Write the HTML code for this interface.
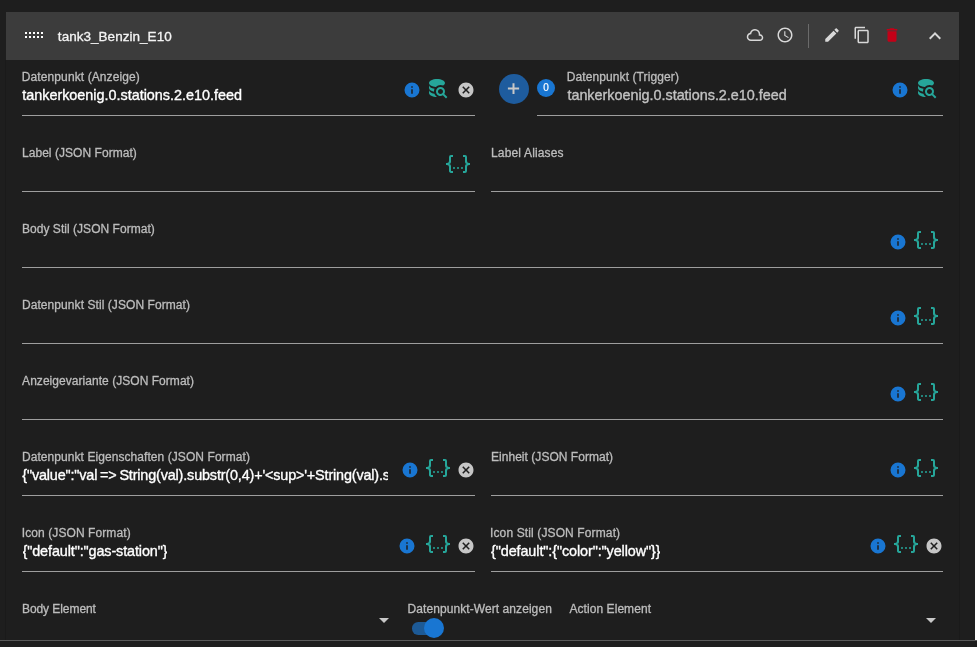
<!DOCTYPE html>
<html lang="de"><head><meta charset="utf-8"><title>tank3_Benzin_E10</title>
<style>
html,body{margin:0;padding:0;}
body{width:977px;height:647px;overflow:hidden;position:relative;background:#1e1e1e;font-family:"Liberation Sans",sans-serif;color:#fff;}
.abs{position:absolute;}
.ic{position:absolute;display:block;}
.lbl,#ttl{-webkit-text-stroke:0.3px currentColor;}
.val{-webkit-text-stroke:0.35px currentColor;}
#app{position:absolute;left:0;top:0;width:977px;height:647px;will-change:transform;}
.lbl{position:absolute;font-size:12px;line-height:14px;color:#bdbdbd;white-space:nowrap;}
.val{position:absolute;font-size:14.4px;line-height:18px;color:#fff;white-space:nowrap;overflow:hidden;}
.ul{position:absolute;height:1px;background:#9e9e9e;}
#hdr{position:absolute;left:6px;top:12px;width:953px;height:48px;background:#3c3c3c;}
#ttl{position:absolute;top:28.7px;font-size:13.5px;line-height:16px;color:#f4f4f4;white-space:nowrap;}
</style></head><body>
<div id="app">
<div class="abs" style="left:5px;top:60px;width:1px;height:580px;background:#1a1a1a"></div>
<div class="abs" style="left:959px;top:60px;width:1px;height:580px;background:#1a1a1a"></div>
<div class="abs" style="left:975px;top:0;width:2px;height:640px;background:#fff"></div>
<div class="abs" style="left:0;top:640px;width:977px;height:1px;background:#5a5a5a"></div>
<div id="hdr"></div>

<svg class="ic" style="left:25px;top:32px;width:18px;height:6px" viewBox="0 0 18 6" fill="#fff"><rect x="0" y="0" width="2" height="2"/><rect x="4" y="0" width="2" height="2"/><rect x="8" y="0" width="2" height="2"/><rect x="12" y="0" width="2" height="2"/><rect x="16" y="0" width="2" height="2"/><rect x="0" y="4" width="2" height="2"/><rect x="4" y="4" width="2" height="2"/><rect x="8" y="4" width="2" height="2"/><rect x="12" y="4" width="2" height="2"/><rect x="16" y="4" width="2" height="2"/></svg>
<div id="ttl" style="left:57.85px;letter-spacing:0.034px;">tank3_Benzin_E10</div>
<svg class="ic" style="left:746.0px;top:26.0px;width:18px;height:18px" viewBox="0 0 24 24"><path fill="#d8d8d8" d="M6.5 20Q4.22 20 2.61 18.43 1 16.85 1 14.58 1 12.63 2.17 11.1 3.35 9.57 5.25 9.15 5.88 6.85 7.75 5.43 9.63 4 12 4 14.93 4 16.96 6.04 19 8.07 19 11 20.73 11.2 21.86 12.5 23 13.78 23 15.5 23 17.38 21.69 18.69 20.38 20 18.5 20M6.5 18H18.5Q19.55 18 20.27 17.27 21 16.55 21 15.5 21 14.45 20.27 13.73 19.55 13 18.5 13H17V11Q17 8.930 15.54 7.46 14.08 6 12 6 9.930 6 8.46 7.46 7 8.930 7 11H6.5Q5.05 11 4.03 12.03 3 13.05 3 14.5 3 15.95 4.03 17 5.05 18 6.5 18Z"/></svg>
<svg class="ic" style="left:776.0px;top:26.0px;width:18px;height:18px" viewBox="0 0 24 24"><path fill="#d8d8d8" d="M11.99 2C6.47 2 2 6.480 2 12s4.470 10 9.990 10C17.520 22 22 17.520 22 12S17.520 2 11.990 2zM12 20c-4.420 0-8-3.580-8-8s3.580-8 8-8 8 3.580 8 8-3.580 8-8 8zm.5-13H11v6l5.250 3.150.75-1.230-4.500-2.670z"/></svg>
<div class="abs" style="left:808px;top:24px;width:1px;height:24px;background:#6b6b6b"></div>
<svg class="ic" style="left:823.0px;top:26.0px;width:18px;height:18px" viewBox="0 0 24 24"><path fill="#d8d8d8" d="M3 17.250V21h3.750L17.810 9.940l-3.750-3.750L3 17.250zM20.710 7.040c.39-.39.39-1.020 0-1.410l-2.340-2.340c-.39-.39-1.020-.39-1.410 0l-1.830 1.830 3.750 3.750 1.830-1.830z"/></svg>
<svg class="ic" style="left:852.5px;top:26.0px;width:18px;height:18px" viewBox="0 0 24 24"><path fill="#d8d8d8" d="M16 1H4c-1.100 0-2 .9-2 2v14h2V3h12V1zm3 4H8c-1.100 0-2 .9-2 2v14c0 1.100.9 2 2 2h11c1.100 0 2-.9 2-2V7c0-1.100-.9-2-2-2zm0 16H8V7h11v14z"/></svg>
<svg class="ic" style="left:883.0px;top:26.0px;width:18px;height:18px" viewBox="0 0 24 24"><path fill="#c30017" d="M6 19c0 1.100.9 2 2 2h8c1.100 0 2-.9 2-2V7H6v12zM19 4h-3.500l-1-1h-5l-1 1H5v2h14V4z"/></svg>
<svg class="ic" style="left:923.0px;top:24.0px;width:24px;height:24px" viewBox="0 0 24 24"><path fill="#d8d8d8" d="M12 8l-6 6 1.410 1.410L12 10.830l4.590 4.580L18 14z"/></svg>
<div class="lbl" style="left:21.8px;top:70px;letter-spacing:0.103px;">Datenpunkt (Anzeige)</div>
<div class="val" style="left:22.27px;top:86px;letter-spacing:-0.012px;">tankerkoenig.0.stations.2.e10.feed</div>
<div class="ul" style="left:22px;top:115px;width:453px"></div>
<svg class="ic" style="left:403px;top:81px;width:18px;height:18px" viewBox="0 0 24 24"><path fill="#1976d2" d="M13,9H11V7H13M13,17H11V11H13M12,2A10,10 0 0,0 2,12A10,10 0 0,0 12,22A10,10 0 0,0 22,12A10,10 0 0,0 12,2Z"/></svg>
<svg class="ic" style="left:425px;top:75.7px;width:24px;height:24px" viewBox="0 0 24 24"><path fill="#26a69a" d="M18.68,12.32C16.92,10.56 14.07,10.57 12.32,12.33C10.56,14.09 10.56,16.94 12.32,18.69C13.81,20.17 16.11,20.43 17.89,19.32L21,22.39L22.39,21L19.3,17.89C20.43,16.12 20.17,13.8 18.68,12.32M17.27,17.27C16.29,18.25 14.71,18.24 13.73,17.27C12.76,16.29 12.76,14.71 13.74,13.73C14.71,12.76 16.29,12.76 17.27,13.73C18.24,14.71 18.24,16.29 17.27,17.27M10.9,20.1C10.25,19.44 9.74,18.65 9.42,17.78C6.27,17.25 4,15.76 4,14V17C4,19.21 7.58,21 12,21V21C11.59,20.74 11.22,20.44 10.9,20.1M4,9V12C4,13.68 6.07,15.12 9,15.7C9,15.63 9,15.57 9,15.5C9,14.57 9.2,13.65 9.58,12.81C6.34,12.3 4,10.79 4,9M12,3C7.58,3 4,4.79 4,7C4,9 7,10.68 10.85,11H10.9C12.1,9.74 13.76,9 15.5,9C16.41,9 17.31,9.19 18.14,9.56C19.17,9.09 19.87,8.12 20,7C20,4.79 16.42,3 12,3Z"/></svg>
<svg class="ic" style="left:457px;top:81px;width:18px;height:18px" viewBox="0 0 24 24"><path fill="#c6c6c6" d="M12,2C17.53,2 22,6.47 22,12C22,17.53 17.53,22 12,22C6.47,22 2,17.53 2,12C2,6.47 6.47,2 12,2M15.59,7L12,10.59L8.41,7L7,8.41L10.59,12L7,15.59L8.41,17L12,13.41L15.59,17L17,15.59L13.41,12L17,8.41L15.59,7Z"/></svg>
<div class="abs" style="left:498.8px;top:73.7px;width:30.4px;height:30.4px;border-radius:50%;background:#1e5c9e"></div>
<svg class="ic" style="left:498px;top:73px;width:32px;height:32px" viewBox="0 0 32 32"><path fill="#c8c8c8" d="M9.900 14.600h11.200v2H9.900zM14.500 10.200h2v10.800h-2z"/></svg>
<div class="abs" style="left:537px;top:79px;width:18px;height:18px;border-radius:50%;background:#1976d2;color:#fff;font-size:10px;line-height:18px;text-align:center;-webkit-text-stroke:0.2px #fff">0</div>
<div class="lbl" style="left:566.7px;top:70px;letter-spacing:0.102px;">Datenpunkt (Trigger)</div>
<div class="val" style="left:567.43px;top:86px;letter-spacing:-0.023px;color:#c2c2c2">tankerkoenig.0.stations.2.e10.feed</div>
<div class="ul" style="left:537px;top:115px;width:406px"></div>
<svg class="ic" style="left:891px;top:81px;width:18px;height:18px" viewBox="0 0 24 24"><path fill="#1976d2" d="M13,9H11V7H13M13,17H11V11H13M12,2A10,10 0 0,0 2,12A10,10 0 0,0 12,22A10,10 0 0,0 22,12A10,10 0 0,0 12,2Z"/></svg>
<svg class="ic" style="left:913.8px;top:75.7px;width:24px;height:24px" viewBox="0 0 24 24"><path fill="#26a69a" d="M18.68,12.32C16.92,10.56 14.07,10.57 12.32,12.33C10.56,14.09 10.56,16.94 12.32,18.69C13.81,20.17 16.11,20.43 17.89,19.32L21,22.39L22.39,21L19.3,17.89C20.43,16.12 20.17,13.8 18.68,12.32M17.27,17.27C16.29,18.25 14.71,18.24 13.73,17.27C12.76,16.29 12.76,14.71 13.74,13.73C14.71,12.76 16.29,12.76 17.27,13.73C18.24,14.71 18.24,16.29 17.27,17.27M10.9,20.1C10.25,19.44 9.74,18.65 9.42,17.78C6.27,17.25 4,15.76 4,14V17C4,19.21 7.58,21 12,21V21C11.59,20.74 11.22,20.44 10.9,20.1M4,9V12C4,13.68 6.07,15.12 9,15.7C9,15.63 9,15.57 9,15.5C9,14.57 9.2,13.65 9.58,12.81C6.34,12.3 4,10.79 4,9M12,3C7.58,3 4,4.79 4,7C4,9 7,10.68 10.85,11H10.9C12.1,9.74 13.76,9 15.5,9C16.41,9 17.31,9.19 18.14,9.56C19.17,9.09 19.87,8.12 20,7C20,4.79 16.42,3 12,3Z"/></svg>
<div class="lbl" style="left:21.98px;top:146px;letter-spacing:0.046px;">Label (JSON Format)</div>
<div class="ul" style="left:22px;top:191px;width:453px"></div>
<svg class="ic" style="left:445.8px;top:152px;width:24px;height:24px" viewBox="0 0 24 24"><path fill="#26a69a" d="M5,3H7V5H5V10A2,2 0 0,1 3,12A2,2 0 0,1 5,14V19H7V21H5C3.93,20.73 3,20.1 3,19V15A2,2 0 0,0 1,13H0V11H1A2,2 0 0,0 3,9V5A2,2 0 0,1 5,3M19,3A2,2 0 0,1 21,5V9A2,2 0 0,0 23,11H24V13H23A2,2 0 0,0 21,15V19A2,2 0 0,1 19,21H17V19H19V14A2,2 0 0,1 21,12A2,2 0 0,1 19,10V5H17V3H19M12,15A1,1 0 0,1 13,16A1,1 0 0,1 12,17A1,1 0 0,1 11,16A1,1 0 0,1 12,15M8,15A1,1 0 0,1 9,16A1,1 0 0,1 8,17A1,1 0 0,1 7,16A1,1 0 0,1 8,15M16,15A1,1 0 0,1 17,16A1,1 0 0,1 16,17A1,1 0 0,1 15,16A1,1 0 0,1 16,15Z"/></svg>
<div class="lbl" style="left:490.98px;top:146px;letter-spacing:0.160px;">Label Aliases</div>
<div class="ul" style="left:491px;top:191px;width:452px"></div>
<div class="lbl" style="left:21.98px;top:222px;letter-spacing:0.038px;">Body Stil (JSON Format)</div>
<div class="ul" style="left:22px;top:267px;width:921px"></div>
<svg class="ic" style="left:889px;top:233px;width:18px;height:18px" viewBox="0 0 24 24"><path fill="#1976d2" d="M13,9H11V7H13M13,17H11V11H13M12,2A10,10 0 0,0 2,12A10,10 0 0,0 12,22A10,10 0 0,0 22,12A10,10 0 0,0 12,2Z"/></svg>
<svg class="ic" style="left:914.2px;top:228px;width:24px;height:24px" viewBox="0 0 24 24"><path fill="#26a69a" d="M5,3H7V5H5V10A2,2 0 0,1 3,12A2,2 0 0,1 5,14V19H7V21H5C3.93,20.73 3,20.1 3,19V15A2,2 0 0,0 1,13H0V11H1A2,2 0 0,0 3,9V5A2,2 0 0,1 5,3M19,3A2,2 0 0,1 21,5V9A2,2 0 0,0 23,11H24V13H23A2,2 0 0,0 21,15V19A2,2 0 0,1 19,21H17V19H19V14A2,2 0 0,1 21,12A2,2 0 0,1 19,10V5H17V3H19M12,15A1,1 0 0,1 13,16A1,1 0 0,1 12,17A1,1 0 0,1 11,16A1,1 0 0,1 12,15M8,15A1,1 0 0,1 9,16A1,1 0 0,1 8,17A1,1 0 0,1 7,16A1,1 0 0,1 8,15M16,15A1,1 0 0,1 17,16A1,1 0 0,1 16,17A1,1 0 0,1 15,16A1,1 0 0,1 16,15Z"/></svg>
<div class="lbl" style="left:21.98px;top:298px;letter-spacing:0.070px;">Datenpunkt Stil (JSON Format)</div>
<div class="ul" style="left:22px;top:343px;width:921px"></div>
<svg class="ic" style="left:889px;top:309px;width:18px;height:18px" viewBox="0 0 24 24"><path fill="#1976d2" d="M13,9H11V7H13M13,17H11V11H13M12,2A10,10 0 0,0 2,12A10,10 0 0,0 12,22A10,10 0 0,0 22,12A10,10 0 0,0 12,2Z"/></svg>
<svg class="ic" style="left:914.2px;top:304px;width:24px;height:24px" viewBox="0 0 24 24"><path fill="#26a69a" d="M5,3H7V5H5V10A2,2 0 0,1 3,12A2,2 0 0,1 5,14V19H7V21H5C3.93,20.73 3,20.1 3,19V15A2,2 0 0,0 1,13H0V11H1A2,2 0 0,0 3,9V5A2,2 0 0,1 5,3M19,3A2,2 0 0,1 21,5V9A2,2 0 0,0 23,11H24V13H23A2,2 0 0,0 21,15V19A2,2 0 0,1 19,21H17V19H19V14A2,2 0 0,1 21,12A2,2 0 0,1 19,10V5H17V3H19M12,15A1,1 0 0,1 13,16A1,1 0 0,1 12,17A1,1 0 0,1 11,16A1,1 0 0,1 12,15M8,15A1,1 0 0,1 9,16A1,1 0 0,1 8,17A1,1 0 0,1 7,16A1,1 0 0,1 8,15M16,15A1,1 0 0,1 17,16A1,1 0 0,1 16,17A1,1 0 0,1 15,16A1,1 0 0,1 16,15Z"/></svg>
<div class="lbl" style="left:22.12px;top:374px;letter-spacing:0.041px;">Anzeigevariante (JSON Format)</div>
<div class="ul" style="left:22px;top:419px;width:921px"></div>
<svg class="ic" style="left:889px;top:385px;width:18px;height:18px" viewBox="0 0 24 24"><path fill="#1976d2" d="M13,9H11V7H13M13,17H11V11H13M12,2A10,10 0 0,0 2,12A10,10 0 0,0 12,22A10,10 0 0,0 22,12A10,10 0 0,0 12,2Z"/></svg>
<svg class="ic" style="left:914.2px;top:380px;width:24px;height:24px" viewBox="0 0 24 24"><path fill="#26a69a" d="M5,3H7V5H5V10A2,2 0 0,1 3,12A2,2 0 0,1 5,14V19H7V21H5C3.93,20.73 3,20.1 3,19V15A2,2 0 0,0 1,13H0V11H1A2,2 0 0,0 3,9V5A2,2 0 0,1 5,3M19,3A2,2 0 0,1 21,5V9A2,2 0 0,0 23,11H24V13H23A2,2 0 0,0 21,15V19A2,2 0 0,1 19,21H17V19H19V14A2,2 0 0,1 21,12A2,2 0 0,1 19,10V5H17V3H19M12,15A1,1 0 0,1 13,16A1,1 0 0,1 12,17A1,1 0 0,1 11,16A1,1 0 0,1 12,15M8,15A1,1 0 0,1 9,16A1,1 0 0,1 8,17A1,1 0 0,1 7,16A1,1 0 0,1 8,15M16,15A1,1 0 0,1 17,16A1,1 0 0,1 16,17A1,1 0 0,1 15,16A1,1 0 0,1 16,15Z"/></svg>
<div class="lbl" style="left:21.98px;top:450px;letter-spacing:0.067px;">Datenpunkt Eigenschaften (JSON Format)</div>
<div class="val" style="left:22.3px;top:466px;letter-spacing:-0.155px;width:366.2px;word-spacing:-1px">{"value":"val =&gt; String(val).substr(0,4)+'&lt;sup&gt;'+String(val).substr(4,1)+'&lt;/sup&gt;'"}</div>
<div class="ul" style="left:22px;top:495px;width:453px"></div>
<svg class="ic" style="left:401px;top:461px;width:18px;height:18px" viewBox="0 0 24 24"><path fill="#1976d2" d="M13,9H11V7H13M13,17H11V11H13M12,2A10,10 0 0,0 2,12A10,10 0 0,0 12,22A10,10 0 0,0 22,12A10,10 0 0,0 12,2Z"/></svg>
<svg class="ic" style="left:425.8px;top:456px;width:24px;height:24px" viewBox="0 0 24 24"><path fill="#26a69a" d="M5,3H7V5H5V10A2,2 0 0,1 3,12A2,2 0 0,1 5,14V19H7V21H5C3.93,20.73 3,20.1 3,19V15A2,2 0 0,0 1,13H0V11H1A2,2 0 0,0 3,9V5A2,2 0 0,1 5,3M19,3A2,2 0 0,1 21,5V9A2,2 0 0,0 23,11H24V13H23A2,2 0 0,0 21,15V19A2,2 0 0,1 19,21H17V19H19V14A2,2 0 0,1 21,12A2,2 0 0,1 19,10V5H17V3H19M12,15A1,1 0 0,1 13,16A1,1 0 0,1 12,17A1,1 0 0,1 11,16A1,1 0 0,1 12,15M8,15A1,1 0 0,1 9,16A1,1 0 0,1 8,17A1,1 0 0,1 7,16A1,1 0 0,1 8,15M16,15A1,1 0 0,1 17,16A1,1 0 0,1 16,17A1,1 0 0,1 15,16A1,1 0 0,1 16,15Z"/></svg>
<svg class="ic" style="left:457px;top:461px;width:18px;height:18px" viewBox="0 0 24 24"><path fill="#c6c6c6" d="M12,2C17.53,2 22,6.47 22,12C22,17.53 17.53,22 12,22C6.47,22 2,17.53 2,12C2,6.47 6.47,2 12,2M15.59,7L12,10.59L8.41,7L7,8.41L10.59,12L7,15.59L8.41,17L12,13.41L15.59,17L17,15.59L13.41,12L17,8.41L15.59,7Z"/></svg>
<div class="lbl" style="left:490.98px;top:450px;letter-spacing:0.039px;">Einheit (JSON Format)</div>
<div class="ul" style="left:491px;top:495px;width:452px"></div>
<svg class="ic" style="left:889px;top:461px;width:18px;height:18px" viewBox="0 0 24 24"><path fill="#1976d2" d="M13,9H11V7H13M13,17H11V11H13M12,2A10,10 0 0,0 2,12A10,10 0 0,0 12,22A10,10 0 0,0 22,12A10,10 0 0,0 12,2Z"/></svg>
<svg class="ic" style="left:914.2px;top:456px;width:24px;height:24px" viewBox="0 0 24 24"><path fill="#26a69a" d="M5,3H7V5H5V10A2,2 0 0,1 3,12A2,2 0 0,1 5,14V19H7V21H5C3.93,20.73 3,20.1 3,19V15A2,2 0 0,0 1,13H0V11H1A2,2 0 0,0 3,9V5A2,2 0 0,1 5,3M19,3A2,2 0 0,1 21,5V9A2,2 0 0,0 23,11H24V13H23A2,2 0 0,0 21,15V19A2,2 0 0,1 19,21H17V19H19V14A2,2 0 0,1 21,12A2,2 0 0,1 19,10V5H17V3H19M12,15A1,1 0 0,1 13,16A1,1 0 0,1 12,17A1,1 0 0,1 11,16A1,1 0 0,1 12,15M8,15A1,1 0 0,1 9,16A1,1 0 0,1 8,17A1,1 0 0,1 7,16A1,1 0 0,1 8,15M16,15A1,1 0 0,1 17,16A1,1 0 0,1 16,17A1,1 0 0,1 15,16A1,1 0 0,1 16,15Z"/></svg>
<div class="lbl" style="left:21.85px;top:526px;letter-spacing:0.084px;">Icon (JSON Format)</div>
<div class="val" style="left:22.51px;top:542px;letter-spacing:-0.108px;">{"default":"gas-station"}</div>
<div class="ul" style="left:22px;top:571px;width:453px"></div>
<svg class="ic" style="left:397.8px;top:537px;width:18px;height:18px" viewBox="0 0 24 24"><path fill="#1976d2" d="M13,9H11V7H13M13,17H11V11H13M12,2A10,10 0 0,0 2,12A10,10 0 0,0 12,22A10,10 0 0,0 22,12A10,10 0 0,0 12,2Z"/></svg>
<svg class="ic" style="left:425.8px;top:532px;width:24px;height:24px" viewBox="0 0 24 24"><path fill="#26a69a" d="M5,3H7V5H5V10A2,2 0 0,1 3,12A2,2 0 0,1 5,14V19H7V21H5C3.93,20.73 3,20.1 3,19V15A2,2 0 0,0 1,13H0V11H1A2,2 0 0,0 3,9V5A2,2 0 0,1 5,3M19,3A2,2 0 0,1 21,5V9A2,2 0 0,0 23,11H24V13H23A2,2 0 0,0 21,15V19A2,2 0 0,1 19,21H17V19H19V14A2,2 0 0,1 21,12A2,2 0 0,1 19,10V5H17V3H19M12,15A1,1 0 0,1 13,16A1,1 0 0,1 12,17A1,1 0 0,1 11,16A1,1 0 0,1 12,15M8,15A1,1 0 0,1 9,16A1,1 0 0,1 8,17A1,1 0 0,1 7,16A1,1 0 0,1 8,15M16,15A1,1 0 0,1 17,16A1,1 0 0,1 16,17A1,1 0 0,1 15,16A1,1 0 0,1 16,15Z"/></svg>
<svg class="ic" style="left:457px;top:537px;width:18px;height:18px" viewBox="0 0 24 24"><path fill="#c6c6c6" d="M12,2C17.53,2 22,6.47 22,12C22,17.53 17.53,22 12,22C6.47,22 2,17.53 2,12C2,6.47 6.47,2 12,2M15.59,7L12,10.59L8.41,7L7,8.41L10.59,12L7,15.59L8.41,17L12,13.41L15.59,17L17,15.59L13.41,12L17,8.41L15.59,7Z"/></svg>
<div class="lbl" style="left:490.05px;top:526px;letter-spacing:0.122px;">Icon Stil (JSON Format)</div>
<div class="val" style="left:491.0px;top:542px;letter-spacing:-0.093px;">{"default":{"color":"yellow"}}</div>
<div class="ul" style="left:491px;top:571px;width:452px"></div>
<svg class="ic" style="left:869px;top:537px;width:18px;height:18px" viewBox="0 0 24 24"><path fill="#1976d2" d="M13,9H11V7H13M13,17H11V11H13M12,2A10,10 0 0,0 2,12A10,10 0 0,0 12,22A10,10 0 0,0 22,12A10,10 0 0,0 12,2Z"/></svg>
<svg class="ic" style="left:894.2px;top:532px;width:24px;height:24px" viewBox="0 0 24 24"><path fill="#26a69a" d="M5,3H7V5H5V10A2,2 0 0,1 3,12A2,2 0 0,1 5,14V19H7V21H5C3.93,20.73 3,20.1 3,19V15A2,2 0 0,0 1,13H0V11H1A2,2 0 0,0 3,9V5A2,2 0 0,1 5,3M19,3A2,2 0 0,1 21,5V9A2,2 0 0,0 23,11H24V13H23A2,2 0 0,0 21,15V19A2,2 0 0,1 19,21H17V19H19V14A2,2 0 0,1 21,12A2,2 0 0,1 19,10V5H17V3H19M12,15A1,1 0 0,1 13,16A1,1 0 0,1 12,17A1,1 0 0,1 11,16A1,1 0 0,1 12,15M8,15A1,1 0 0,1 9,16A1,1 0 0,1 8,17A1,1 0 0,1 7,16A1,1 0 0,1 8,15M16,15A1,1 0 0,1 17,16A1,1 0 0,1 16,17A1,1 0 0,1 15,16A1,1 0 0,1 16,15Z"/></svg>
<svg class="ic" style="left:925px;top:537px;width:18px;height:18px" viewBox="0 0 24 24"><path fill="#c6c6c6" d="M12,2C17.53,2 22,6.47 22,12C22,17.53 17.53,22 12,22C6.47,22 2,17.53 2,12C2,6.47 6.47,2 12,2M15.59,7L12,10.59L8.41,7L7,8.41L10.59,12L7,15.59L8.41,17L12,13.41L15.59,17L17,15.59L13.41,12L17,8.41L15.59,7Z"/></svg>
<div class="lbl" style="left:21.98px;top:602px;letter-spacing:-0.067px;">Body Element</div>
<svg class="ic" style="left:379px;top:617.5px;width:10px;height:5px" viewBox="0 0 10 5"><path fill="#c8c8c8" d="M0 0h10L5 5z"/></svg>
<div class="lbl" style="left:407.51px;top:602px;letter-spacing:0.077px;">Datenpunkt-Wert anzeigen</div>
<div class="abs" style="left:412px;top:622px;width:30px;height:12.5px;border-radius:6.25px;background:#1d5a96"></div>
<div class="abs" style="left:423.7px;top:617.8px;width:20.4px;height:20.4px;border-radius:50%;background:#1976d2"></div>
<div class="lbl" style="left:569.39px;top:602px;letter-spacing:0.072px;">Action Element</div>
<svg class="ic" style="left:926px;top:617.5px;width:10px;height:5px" viewBox="0 0 10 5"><path fill="#c8c8c8" d="M0 0h10L5 5z"/></svg>
</div>
</body></html>
